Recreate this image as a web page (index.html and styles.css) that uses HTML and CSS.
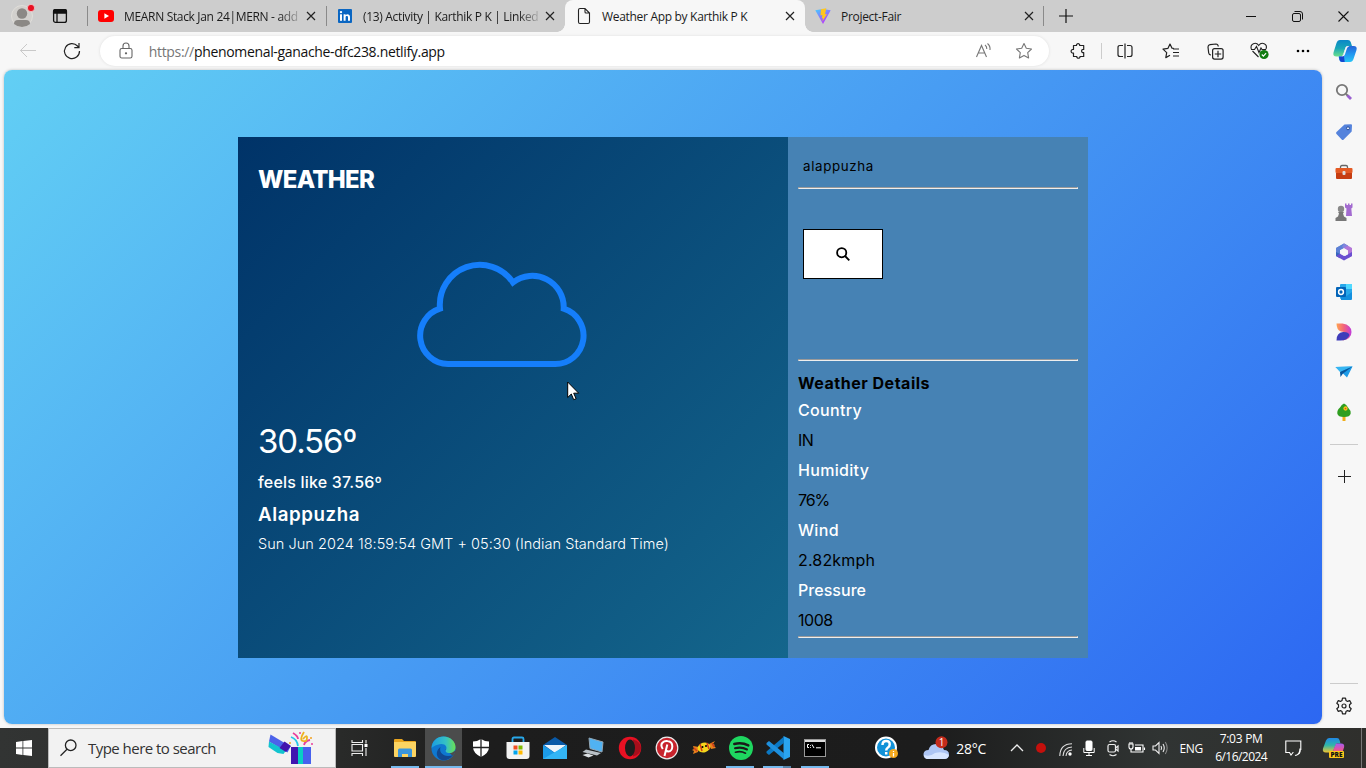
FILE: index.html
```html
<!DOCTYPE html>
<html lang="en">
<head>
<meta charset="utf-8">
<title>Weather App by Karthik P K</title>
<link rel="stylesheet" href="styles.css">
</head>
<body>
<div class="screen">
<header class="tabstrip">
  <div class="profile"><svg width="24" height="24" viewBox="0 0 24 24"><circle cx="12" cy="12" r="10.500" fill="#d2d0cd" stroke="#e0deda"/><circle cx="12" cy="9.500" r="5.200" fill="#8b8885"/><path d="M4 20q0-4 4-4h8q4 0 4 4-3.500 3-8 3t-8-3z" fill="#8b8885"/><circle cx="21" cy="4" r="3.600" fill="#e81123" stroke="#f3dada" stroke-width=".7"/></svg></div>
  <div class="workspaces"><svg width="16" height="16" viewBox="0 0 16 16" fill="none" stroke="#111" stroke-width="1.300"><rect x="1.600" y="1.600" width="12.800" height="12.800" rx="2"/><path d="M1.600 3q0-1.400 1.400-1.400h10q1.400 0 1.400 1.400v2H1.600z" fill="#111"/><path d="M5 5v9"/></svg></div>
  <div class="tab tab-line"><svg class="fav" width="16" height="16" viewBox="0 0 16 16"><rect y="2" width="16" height="12" rx="3" fill="#f00"/><path d="M6.400 5.200v5.600L11 8z" fill="#fff"/></svg><span class="tab-title fade">MEARN Stack Jan 24|MERN - add</span><svg class="x" width="10" height="10" viewBox="0 0 10 10"><path d="M1 1l8 8M9 1L1 9"/></svg></div>
  <div class="tab tab-line"><svg class="fav" width="16" height="16" viewBox="0 0 16 16"><rect x="1" y="1" width="14" height="14" rx="1" fill="#0a66c2"/><g fill="#fff"><rect x="3" y="6.300" width="2" height="6.500"/><circle cx="4" cy="4.100" r="1.200"/><path d="M6.600 6.300h2v1c1-1.700 4.400-1.600 4.400 1.700v3.800h-2V9.400c0-2-2.400-1.900-2.400 0v3.400h-2z"/></g></svg><span class="tab-title fade">(13) Activity | Karthik P K | Linked</span><svg class="x" width="10" height="10" viewBox="0 0 10 10"><path d="M1 1l8 8M9 1L1 9"/></svg></div>
  <div class="tab tab-active"><svg class="fav" width="16" height="16" viewBox="0 0 16 16" fill="none" stroke="#222" stroke-width="1.100"><path d="M2.500 2q0-1.500 1.500-1.500h5l4.500 4.500v9q0 1.500-1.500 1.500H4q-1.500 0-1.500-1.500zM9 .5V4q0 1 1 1h3.500"/></svg><span class="tab-title">Weather App by Karthik P K</span><svg class="x" width="10" height="10" viewBox="0 0 10 10"><path d="M1 1l8 8M9 1L1 9"/></svg></div>
  <div class="tab tab-last"><svg class="fav" width="16" height="16" viewBox="0 0 16 16"><defs><linearGradient id="vt" x1="0" y1="0" x2=".6" y2="1"><stop stop-color="#41d1ff"/><stop offset="1" stop-color="#bd34fe"/></linearGradient></defs><path d="M.3 2.300L8 .9l7.700 1.400L8 16z" fill="url(#vt)"/><path d="M11.300.3L6 1.300l-.6 6.200 2-.4-.7 3.400 1.400-.4-.8 3.400L12 5.900l-2 .3z" fill="#ffc61e"/></svg><span class="tab-title">Project-Fair</span><svg class="x" width="10" height="10" viewBox="0 0 10 10"><path d="M1 1l8 8M9 1L1 9"/></svg></div>
  <div class="newtab"><svg width="14" height="14" viewBox="0 0 14 14" stroke="#111" stroke-width="1.200"><path d="M7 0v14M0 7h14"/></svg></div>
  <div class="winbtns">
    <div><svg width="10" height="10" viewBox="0 0 10 10" stroke="#111"><path d="M0 5.500h10"/></svg></div>
    <div><svg width="11" height="11" viewBox="0 0 11 11" fill="none" stroke="#111"><rect x=".5" y="2.500" width="8" height="8" rx="1.500"/><path d="M2.500.5H8q2.500 0 2.500 2.500v5.500"/></svg></div>
    <div><svg width="11" height="11" viewBox="0 0 11 11" stroke="#111" stroke-width="1.100"><path d="M.5.5l10 10M10.500.5l-10 10"/></svg></div>
  </div>
</header>
<nav class="toolbar">
  <div class="tb"><svg width="18" height="18" viewBox="0 0 18 18" fill="none" stroke="#c9c9c9"><path d="M17 8.500H1.500M8 2L1.500 8.500 8 15"/></svg></div>
  <div class="tb reload"><svg width="18" height="18" viewBox="0 0 18 18" fill="none" stroke="#222" stroke-width="1.200"><path d="M16.500 9A7.500 7.500 0 1 1 14.500 4L16 5.700M16 1v4.700h-4.700"/></svg></div>
  <div class="address">
    <svg class="lock" width="14" height="18" viewBox="0 0 14 18" fill="none" stroke="#666" stroke-width="1.100"><rect x="1" y="6.500" width="12" height="9.500" rx="1.800"/><path d="M4 6.500V4q0-3 3-3t3 3v2.500"/><circle cx="7" cy="11.300" r=".6" fill="#666"/></svg>
    <span class="url"><span class="scheme">https://</span>phenomenal-ganache-dfc238.netlify.app</span>
    <svg class="aloud" width="18" height="16" viewBox="0 0 18 16" fill="none" stroke="#777" stroke-width="1.100"><path d="M1.500 14L6.500 2.500 11.500 14M3.200 10h6.600M10 2q2 1.500 1.800 4M12.500.5Q15.500 3 15 7"/></svg>
    <svg class="star" width="18" height="18" viewBox="0 0 18 18" fill="none" stroke="#777" stroke-width="1.100" stroke-linejoin="round"><path d="M9 1.500l2.300 4.800 5.200.7-3.800 3.600.9 5.300L9 13.400l-4.600 2.500.9-5.300L1.500 7l5.200-.7z"/></svg>
  </div>
  <div class="tb ext"><svg width="16" height="16" viewBox="0 0 16 16" fill="none" stroke="#222" stroke-width="1.200" stroke-linejoin="round"><path d="M3.500 2.500h3c-.3-2.500 3.500-2.500 3.200 0h4v4c-2.800-.5-2.800 3.500 0 3v4H10c.3 2.300-3.500 2.300-3.200 0H3.500V10c-3.200.5-3.200-4 0-3.500z"/></svg></div>
  <div class="tb split"><svg width="16" height="16" viewBox="0 0 16 16" fill="none" stroke="#222" stroke-width="1.200"><path d="M6 2.500H3Q1 2.500 1 4.500v7q0 2 2 2h3M10 2.500h3q2 0 2 2v7q0 2-2 2h-3M8 .5v15"/></svg></div>
  <div class="tb"><svg width="18" height="16" viewBox="0 0 18 16" fill="none" stroke="#222" stroke-width="1.200" stroke-linejoin="round"><path d="M12 5.500l-2-.3L8 1 6 5.300l-5 .8 3.700 3.500-.9 5L8 12.300M11 6h6M11 9.500h6M11 13h6"/></svg></div>
  <div class="tb"><svg width="17" height="17" viewBox="0 0 17 17" fill="none" stroke="#222" stroke-width="1.200"><path d="M4 12Q2 12 1.700 10L1 4Q1 2 3 1.700L9 1q2 0 2.300 2.500"/><rect x="5.600" y="5.600" width="10.500" height="10.500" rx="2"/><path d="M11 7.800v6.400M7.800 11h6.400"/></svg></div>
  <div class="tb"><svg width="19" height="18" viewBox="0 0 19 18" fill="none" stroke="#222" stroke-width="1.100"><path d="M8.500 15L2.500 9M1.300 7C-.3 1.500 6-.5 8.700 3.500 11.500-.5 18 1.500 16 7M1 7.500h3.500l2-3 2.500 6 2-4.500 1 1.500h4"/><circle cx="14" cy="12.500" r="4.600" fill="#107c10" stroke="none"/><path d="M11.800 12.500l1.600 1.600 2.700-3" stroke="#fff"/></svg></div>
  <div class="tb more"><svg width="14" height="4" viewBox="0 0 14 4"><circle cx="2" cy="2" r="1.300"/><circle cx="7" cy="2" r="1.300"/><circle cx="12" cy="2" r="1.300"/></svg></div>
  <div class="tb pilot"><svg width="24" height="24" viewBox="0 0 24 24"><defs><linearGradient id="c1" x1="0" y1="0" x2="0" y2="1"><stop stop-color="#0b86c8"/><stop offset=".5" stop-color="#18a6b8"/><stop offset="1" stop-color="#6be08b"/></linearGradient><linearGradient id="c2" x1="0" y1="0" x2="0" y2="1"><stop stop-color="#2364d8"/><stop offset=".5" stop-color="#2196f0"/><stop offset="1" stop-color="#28c5f5"/></linearGradient></defs><path d="M7 1h8q2 0 2.700 2L19 7h-4q-2 0-2.700 2l-2 6q-.8 2.500-3 2.500H3.500q-4 0-3-4L3.500 4Q4.500 1 7 1z" fill="url(#c1)"/><path d="M17 23H9q-2 0-2.500-2L5.500 17.500H8q2 0 2.700-2l2.200-6.500Q13.700 7 16 7h4.500q4 0 3 4l-3 9q-1 3-3.500 3z" fill="url(#c2)"/><path d="M6 17.500h2q2 0 2.700-2l1 7.500H9q-2 0-2.500-2z" fill="#1545cf"/><path d="M12.600 8.500q.6-1.500 2.400-1.500h1.500q-2 .5-2.600 2.500l-2 6q-.6 2-2.600 2H8q2 0 2.500-2z" fill="#f7f7f7"/></svg></div>
</nav>
<div class="middle">
  <main class="page">
    <section class="card">
      <div class="now">
        <h1>WEATHER</h1>
        <svg class="cloud" width="172" height="110" viewBox="415 259 172 110" fill="none" stroke="#157efb" stroke-width="6"><path d="M448 364A28.300 28.300 0 0 1 440 308.700A40 40 0 0 1 513 282.500A31.400 31.400 0 0 1 563.700 308.700A28.300 28.300 0 0 1 554.700 364Z"/></svg>
        <p class="temp">30.56º</p>
        <p class="feels">feels like 37.56º</p>
        <p class="city">Alappuzha</p>
        <p class="date">Sun Jun 2024 18:59:54 GMT + 05:30 (Indian Standard Time)</p>
        <svg class="cursor" width="13" height="20" viewBox="0 0 13 20"><path d="M.7 1v15.500l3.600-3.500 2.400 5.700 2.400-1-2.400-5.500h5z" fill="#fff" stroke="#000" stroke-width="1"/></svg>
      </div>
      <aside class="details">
        <div class="query">alappuzha</div>
        <hr>
        <button class="go" aria-label="Search"><svg width="14" height="14" viewBox="0 0 14 14" fill="none" stroke="#000" stroke-width="1.800"><circle cx="5.700" cy="5.700" r="4.600"/><path d="M9 9l4.300 4.300"/></svg></button>
        <hr>
        <h2>Weather Details</h2>
        <dl>
          <dt>Country</dt><dd>IN</dd>
          <dt>Humidity</dt><dd class="tight">76%</dd>
          <dt>Wind</dt><dd class="wide">2.82kmph</dd>
          <dt class="plain">Pressure</dt><dd>1008</dd>
        </dl>
        <hr>
      </aside>
    </section>
  </main>
  <aside class="sidebar">
    <div><svg width="18" height="18" viewBox="0 0 18 18" fill="none"><circle cx="7" cy="7" r="5.200" stroke="#777" stroke-width="1.800"/><path d="M11 11l2 2" stroke="#777" stroke-width="2"/><path d="M12.500 12.500l3.500 3.500" stroke="#9a5fd0" stroke-width="2.800"/></svg></div>
    <div><svg width="18" height="18" viewBox="0 0 18 18"><path d="M9.500 1.500l6.500-.3q1 0 1 1l-.3 6.300-8 8q-1 1-2 0L1.500 11q-1-1 0-2z" fill="#5583dc"/><circle cx="13" cy="5.300" r="1.500" fill="#eaf1ff" stroke="#274e9c"/></svg></div>
    <div><svg width="18" height="18" viewBox="0 0 18 18"><path d="M5.500 5V4q0-1.500 1.500-1.500h4q1.500 0 1.500 1.500v1" fill="none" stroke="#666" stroke-width="1.300"/><rect x=".5" y="5" width="17" height="5" rx="1" fill="#e45a24"/><path d="M1 10h16v5q0 1-1 1H2q-1 0-1-1z" fill="#c63d12"/><rect x="7.500" y="8" width="3" height="4" rx="1" fill="#ddd"/></svg></div>
    <div><svg width="18" height="18" viewBox="0 0 18 18"><path d="M10 .5h1.500V2H13V.5h1.500V2H16V.5h1.500v4l-1.200 1 .7 7.500h-6l.5-7.500L10 4.500z" fill="#a36bd0"/><circle cx="6" cy="6" r="3.200" fill="#888"/><path d="M3 9h6l-1 1.500 1 3 2.500 1.500v3H.5v-3L3 13.500l1-3z" fill="#777"/></svg></div>
    <div><svg width="18" height="18" viewBox="0 0 18 18"><path d="M9 .5L1 5v8l4 2.300V7L13 2.700z" fill="#3468bd"/><path d="M9 .5l8 4.500v8l-4 2.300V7.500L7 4z" fill="#b377d8"/><path d="M1 13l4 2.300L9 17.500l8-4.500V9l-7 4-5-2.500z" fill="#6a4fd0"/><path d="M9 .5L1 5v4l4 2V7l8-4.300z" fill="#6f8be0" opacity=".7"/><path d="M9 5.500l3.500 2v4L9 13l-3.500-2V7.500z" fill="#f7f7f7"/></svg></div>
    <div><svg width="18" height="18" viewBox="0 0 18 18"><rect x="5" y="1" width="12" height="15" rx="1" fill="#28a8ea"/><path d="M11 1h6v5h-6z" fill="#50d9ff"/><path d="M6 9l5.500 4L17 9v7q0 1-1 1H6z" fill="#1490df"/><rect x="1" y="4" width="10" height="10" rx="1" fill="#0364b8"/><circle cx="6" cy="9" r="2.400" fill="none" stroke="#fff" stroke-width="1.500"/></svg></div>
    <div><svg width="18" height="18" viewBox="0 0 18 18"><defs><linearGradient id="dg"><stop stop-color="#ffa451"/><stop offset=".5" stop-color="#f2637b"/><stop offset="1" stop-color="#c13bdb"/></linearGradient></defs><path d="M1.500.5h6Q16.500 2 16.500 9t-9 8.500L11 12Q11 8.500 6 8.500 1.500 7 1.500.5z" fill="url(#dg)"/><path d="M1.500 17.500q0-8 6.500-8.500 5.500-.3 6.500 3-2 5.500-9 5.500z" fill="#3f3cba"/></svg></div>
    <div><svg width="18" height="18" viewBox="0 0 18 18"><path d="M.5 4L17.500 3.500 12 14.500 8.500 11z" fill="#1d9be8"/><path d="M.5 4L17.500 3.500 5 9z" fill="#37b6f2"/><path d="M5 9l12.500-5.500L8 10.500 5.500 14z" fill="#07559c"/></svg></div>
    <div><svg width="18" height="18" viewBox="0 0 18 18"><path d="M7.500 12h3v6h-3z" fill="#f0ae1b"/><path d="M9 .5q2.500 1 4 4 3 3 2.700 6Q15 14 9 14t-6.700-3.500Q2 7 5 4.500 6.500 1.500 9 .5z" fill="#2f9e20"/><circle cx="10.500" cy="5.500" r="1.500" fill="#e94b22" stroke="#f9c51b" stroke-width="1.300"/></svg></div>
    <i class="rule"></i>
    <div class="add"><svg width="13" height="13" viewBox="0 0 13 13" stroke="#222"><path d="M6.500 0v13M0 6.500h13"/></svg></div>
    <i class="rule low"></i>
    <div class="gear"><svg width="18" height="18" viewBox="0 0 18 18" fill="none" stroke="#222" stroke-width="1.200" stroke-linejoin="round"><path d="M7.500 1.200h3l.5 2.300 1.500.9 2.200-.8 1.500 2.600-1.700 1.600v2.400l1.700 1.600-1.500 2.600-2.200-.8-1.500.9-.5 2.300h-3L7 14.500l-1.500-.9-2.200.8-1.500-2.600 1.700-1.600V7.800L1.800 6.200l1.500-2.600 2.200.8L7 3.500z"/><circle cx="9" cy="9" r="2"/></svg></div>
  </aside>
</div>
<footer class="taskbar">
  <div class="start"><svg width="16" height="16" viewBox="0 0 16 16" fill="#fff"><path d="M0 2l6.500-.9v6.500H0zM7.300 1L16 0v7.600H7.300zM0 8.400h6.500v6.500L0 14zM7.300 8.400H16V16l-8.700-1z"/></svg></div>
  <div class="search">
    <svg width="18" height="18" viewBox="0 0 18 18" fill="none" stroke="#222" stroke-width="1.300"><circle cx="10.700" cy="6.300" r="5.300"/><path d="M7 10.200L.5 16.700"/></svg>
    <span class="hint">Type here to search</span>
    <svg class="gift" width="48" height="34" viewBox="0 0 48 34"><path d="M3.500 3.500l20 12-3 6L2 10.500z" fill="#4c62ea"/><path d="M2 10.500l17 9-2.500 3.500-6-1-9-6z" fill="#12c4cf"/><path d="M17.500 10.500l6.500 4.500-5 6-6.500-4z" fill="#4214ad"/><rect x="24" y="16" width="20" height="17" fill="#4661ee"/><rect x="24" y="16" width="7" height="17" fill="#4015b0"/><rect x="31" y="16" width="5" height="17" fill="#08cfc4"/><g fill="none" stroke-width="1.800"><path d="M24 6q6 2 7 9" stroke="#27c7e8"/><path d="M26 2q5 3 5 6M37 14q1-4 6-5" stroke="#e83d9c"/><path d="M37 1q-5 8-1 9t4-3-4 1" stroke="#eeb121"/></g><g fill="#e83d9c"><circle cx="33" cy="2" r="1"/><circle cx="45" cy="13" r="1"/></g><circle cx="44" cy="7" r="1" fill="#f0a020"/><circle cx="23" cy="12" r="1" fill="#f0a020"/></svg>
  </div>
  <div class="taskview"><svg width="18" height="16" viewBox="0 0 18 16" fill="none" stroke="#eee" stroke-width="1.100"><path d="M1 0v2.500h10.500V0M1 16v-2.500h10.500V16M1 4.500h10.500v6.500H1zM15 0v3.500M15 8v8"/><path d="M13.500 4h3v3h-3z" fill="#fff" stroke="none"/></svg></div>
  <div class="app open files"><svg width="22" height="20" viewBox="0 0 22 20"><path d="M0 2q0-1 1-1h7l2 2h11q1 0 1 1v14H0z" fill="#e9a51f"/><path d="M0 4h22v14q0 1-1 1H1q-1 0-1-1z" fill="#fcd462"/><path d="M4 19v-7q0-1.500 1.500-1.500h11Q18 10.500 18 12v7h-4v-3H8v3z" fill="#3a96dd"/></svg></div>
  <div class="app open current"><svg width="25" height="25" viewBox="0 0 25 25"><defs><linearGradient id="e1"><stop stop-color="#1b9de2"/><stop offset=".6" stop-color="#35c1c4"/><stop offset="1" stop-color="#6be052"/></linearGradient></defs><circle cx="12.500" cy="12.500" r="12" fill="#0f78d0"/><path d="M14 13q10 5 12 0l-4 7z" fill="#4b4c4c"/><path d="M.5 12C1 5 6 .5 12.500.5 20 .5 24.500 6 24.500 11c0 4-3 6-6 6-3.500 0-4.500-1.500-3.500-3 1.500-3-.5-6-4.500-6C5 8 .5 12 .5 12z" fill="url(#e1)"/><path d="M9.500 11c-2 6 4 11 12.500 8-4 6-11 6.500-14 3.500-4-4-2-9 1.500-11.500z" fill="#12488f"/></svg></div>
  <div class="app"><svg width="18" height="20" viewBox="0 0 18 20"><path d="M9 1q4 2.500 8 2.500V9q0 6-8 10Q1 15 1 9V3.500Q5 3.500 9 1z" fill="#fff"/><path d="M9 1v18M1 9.500h16" stroke="#222" stroke-width="1.300"/></svg></div>
  <div class="app"><svg width="24" height="24" viewBox="0 0 24 24"><path d="M6.500 6V3Q6.500 1.500 8 1.500h8q1.500 0 1.500 1.500v3" fill="none" stroke="#28a8ea" stroke-width="1.800"/><path d="M.5 6h23v14q0 3-3 3h-17q-3 0-3-3z" fill="#f2f2f2"/><path d="M7.500 9.500h4v4h-4z" fill="#f25022"/><path d="M12.500 9.500h4v4h-4z" fill="#7fba00"/><path d="M7.500 14.500h4v4h-4z" fill="#00a4ef"/><path d="M12.500 14.500h4v4h-4z" fill="#ffb900"/></svg></div>
  <div class="app"><svg width="24" height="22" viewBox="0 0 24 22"><path d="M0 8L12 0l12 8v7H0z" fill="#0a5aa8"/><path d="M1 8h22L12 16z" fill="#eef4fa"/><path d="M0 8l12 8 12-8v14H0z" fill="#1c9be8"/><path d="M0 22L24 8v14z" fill="#33b5f5"/></svg></div>
  <div class="app"><svg width="24" height="22" viewBox="0 0 24 22"><path d="M8 1l14 4-1 10-12-3.500z" fill="#50b2f2" stroke="#93a6b4"/><path d="M5 12.500l15 3.500-4 2.500L1.500 15z" fill="#b9c0c6"/><path d="M1.500 18l5-1.500 6 2-5 2z" fill="#dde1e4"/></svg></div>
  <div class="app"><svg width="24" height="24" viewBox="0 0 24 24"><circle cx="12" cy="12" r="11.200" fill="#e81123"/><path d="M15 3.500q8 2 8 8.500t-8 8.500z" fill="#a70e1b"/><ellipse cx="12" cy="12" rx="5" ry="8.500" fill="#1d1d1d"/></svg></div>
  <div class="app"><svg width="24" height="24" viewBox="0 0 24 24"><circle cx="12" cy="12" r="10.800" fill="#c8232c" stroke="#ececec" stroke-width="1.200"/><path d="M7.800 13C4 7.500 9 4.500 12.500 5c7 .8 5.500 10.500 1 10.500-1.500 0-2-1-2-1M12.300 8.500L9.500 20" fill="none" stroke="#fff" stroke-width="2"/></svg></div>
  <div class="app"><svg width="24" height="16" viewBox="0 0 24 16"><path d="M1 6l6 1-1 5-5 2 1-3-2-1 2-1zM23 1l-6 3 2 5 5-1-2-2 1-1-2-1z" fill="#e8801c"/><ellipse cx="12" cy="7.500" rx="6.500" ry="4.800" fill="#f5d51b" transform="rotate(-15 12 7.500)"/><path d="M8 4l2 7M15 3l2 6M2 8l3 3M20 3l2 4" stroke="#d33c1c" stroke-width="1.500"/><circle cx="10.500" cy="7" r="1"/><circle cx="14" cy="6" r="1"/></svg></div>
  <div class="app open"><svg width="24" height="24" viewBox="0 0 24 24" fill="none" stroke="#1a1a1a" stroke-linecap="round"><circle cx="12" cy="12" r="12" fill="#1ed760" stroke="none"/><path d="M5.300 8q7.500-2 14 1.400" stroke-width="2.500"/><path d="M6 12.300q6.500-1.800 12 1.200" stroke-width="2"/><path d="M6.500 16.200q5.500-1.400 10 1" stroke-width="1.700"/></svg></div>
  <div class="app open grouped"><svg width="24" height="24" viewBox="0 0 24 24"><path d="M17.500 0L24 3v18l-6.500 3z" fill="#2aa4f0"/><path d="M18 .5v6.300L3 19 .5 17v-1.500z" fill="#0b78c4"/><path d="M18 23.500v-6.300L3 5 .5 7v1.500z" fill="#1e90de"/></svg></div>
  <div class="app open"><svg width="22" height="18" viewBox="0 0 22 18"><rect x=".5" y=".5" width="21" height="17" fill="#000" stroke="#999"/><path d="M1 2h20" stroke="#ddd" stroke-width="2"/><path d="M5 5.500H3.500v3H5M6.500 6v.8M6.500 8v.8M8 5.500l2 3.500M12 8.800h5" fill="none" stroke="#fff"/></svg></div>
  <div class="help"><svg width="24" height="24" viewBox="0 0 24 24"><circle cx="11" cy="11.500" r="10" fill="#1292d8" stroke="#fff" stroke-width="2"/><path d="M7.500 9q0-4 3.700-4t3.500 3.500q0 2-2 3.200-1.500 1-1.500 2.800M11.200 16v2.500" fill="none" stroke="#fff" stroke-width="2.500"/><circle cx="18.500" cy="17.500" r="4.500" fill="#f5a81c"/><path d="M18.500 15v1M18.500 17v3.500" stroke="#fff" stroke-width="1.300"/></svg></div>
  <div class="weather"><svg width="27" height="24" viewBox="0 0 27 24"><path d="M6 23q-6 0-5.500-5 .5-4 5-4Q7 8 13 8t8 6q5 0 5 4.500T21 23z" fill="#adc5f4"/><path d="M4 23q-3-1-3-4 6 2 11-2 8-2 14 2-1 4-5 4z" fill="#d7e5ff"/><circle cx="18.500" cy="6.300" r="6" fill="#c42b1c"/><text x="18.500" y="10" text-anchor="middle" font-size="10" fill="#fff">1</text></svg><span>28°C</span></div>
  <div class="tray w24"><svg width="14" height="8" viewBox="0 0 14 8" fill="none" stroke="#eee" stroke-width="1.300"><path d="M1 7l6-6 6 6"/></svg></div>
  <div class="tray w23"><svg width="10" height="10" viewBox="0 0 10 10"><circle cx="5" cy="5" r="5" fill="#c4100c"/></svg></div>
  <div class="tray w26 dip"><svg width="13" height="13" viewBox="0 0 13 13" fill="none" stroke="#ddd" stroke-width="1.100"><path d="M.8 13Q1 1 13 .8M4 13q.5-8.500 9-9M7 13q.5-5.500 6-6"/><circle cx="11" cy="11" r="1.700" fill="#fff" stroke="none"/></svg></div>
  <div class="tray w22"><svg width="12" height="16" viewBox="0 0 12 16" fill="none" stroke="#fff"><rect x="3" y="1" width="6" height="9.500" rx="1" fill="#fff"/><path d="M.8 8v4.500h10.400V8M6 12.500v3M3 15.500h6"/></svg></div>
  <div class="tray w25"><svg width="12" height="16" viewBox="0 0 12 16" fill="none" stroke="#eee" stroke-width="1.200"><rect x="1" y="4.500" width="7.500" height="7.500" rx="1.500"/><path d="M8.500 8l2.500-2v5L8.500 9M2.500 2Q6-.5 9.500 2M2.500 14.500q3.500 2.500 7 0"/></svg></div>
  <div class="tray w23"><svg width="17" height="12" viewBox="0 0 17 12" fill="none" stroke="#fff" stroke-width="1.100"><path d="M1 2h4v3Q5 7 3 7T1 5zM2 0v2M4 0v2M3 7v3h2M7 3h8v7H5M16.500 5.500v2.500"/><path d="M7 5h6v3.500H7z" fill="#fff" stroke="none"/></svg></div>
  <div class="tray w24"><svg width="17" height="14" viewBox="0 0 17 14" fill="none" stroke="#eee" stroke-width="1.100"><path d="M1 5h2.500L7 1.500v11L3.500 9H1zM9 5q1.200 2 0 4M11 3q2.500 4 0 8"/><path d="M13.300 1q3.700 6 0 12" stroke="#888"/></svg></div>
  <div class="lang">ENG</div>
  <div class="clock"><span>7:03 PM</span><span class="day">6/16/2024</span></div>
  <div class="tray w42"><svg width="17" height="17" viewBox="0 0 17 17" fill="none" stroke="#fff" stroke-width="1.100"><path d="M8.500 12.500H8L6 15l-1.500-2.500H.8V1h15v9"/><path d="M15 8.500q1.500 6-5 7 5-.5 5-7z" fill="#fff"/></svg></div>
  <div class="tray w38 pre"><svg width="22" height="22" viewBox="0 0 22 22"><defs><linearGradient id="p1" x1="0" y1="0" x2="0" y2="1"><stop stop-color="#2187e6"/><stop offset=".5" stop-color="#2fb6a8"/><stop offset="1" stop-color="#f2c531"/></linearGradient><linearGradient id="p2" x1="0" y1="0" x2="0" y2="1"><stop stop-color="#a65cf0"/><stop offset=".6" stop-color="#e7549b"/><stop offset="1" stop-color="#f58b54"/></linearGradient></defs><path d="M6 1h8q2 0 2.500 2l1 3.500h-4l-4 9H3q-4 0-3-4L3 3.500Q4 1 6 1z" fill="url(#p1)"/><path d="M13 6.500h5q4 0 3 4l-2 6H9z" fill="url(#p2)"/><rect x="6" y="14" width="15" height="7" rx="1" fill="#ffc61a"/><text x="13.500" y="20" text-anchor="middle" font-size="6.500" font-weight="800" fill="#111">PRE</text></svg></div>
  <div class="desk"></div>
</footer>
</div>
</body>
</html>
```
FILE: styles.css
```css
* { box-sizing: border-box; margin: 0; padding: 0; }
body { width: 1366px; height: 768px; overflow: hidden; font-family: "Open Sans", "Noto Sans", sans-serif; font-size: 12px; color: #1b1b1b; }
svg { display: block; flex: none; overflow: visible; }
.screen { display: flex; flex-direction: column; height: 768px; background: #f7f7f7; }

.tabstrip { display: flex; height: 32px; background: #cdcdcd; }
.tabstrip > div { display: flex; align-items: center; }
.profile { width: 44px; justify-content: center; }
.workspaces { width: 43px; padding-left: 8px; }
.tab { width: 239px; padding: 0 10px 0 11px; position: relative; }
.tab-line::before, .tab-last::after { content: ""; position: absolute; left: 0; top: 6px; height: 20px; width: 1px; background: #8a8a8a; }
.tab-last::after { left: auto; right: 0; }
.tab-title { flex: 1; min-width: 0; margin: 0 6px 0 10px; padding-top: 1px; white-space: nowrap; line-height: 20px; letter-spacing: -.31px; }
.fade { -webkit-mask-image: linear-gradient(90deg, #000 88%, rgba(0, 0, 0, .15)); mask-image: linear-gradient(90deg, #000 88%, rgba(0, 0, 0, .15)); letter-spacing: -.33px; }
.x { fill: none; stroke: #222; stroke-width: 1.2; }
.tab-active { width: 240px; background: #f7f7f7; border-radius: 8px 8px 0 0; }
.tab-active::before, .tab-active::after { content: ""; position: absolute; bottom: 0; width: 8px; height: 8px; }
.tab-active::before { left: -8px; background: radial-gradient(circle at 0 0, transparent 7.5px, #f7f7f7 8px); }
.tab-active::after { right: -8px; background: radial-gradient(circle at 100% 0, transparent 7.5px, #f7f7f7 8px); }
.tab-last { padding-left: 10px; }
.newtab { width: 44px; justify-content: center; }
.winbtns { margin-left: auto; }
.winbtns div { width: 46px; display: flex; justify-content: center; }

.toolbar { display: flex; height: 38px; padding-left: 6px; align-items: center; }
.tb { width: 44.4px; height: 38px; display: flex; align-items: center; justify-content: center; flex: none; }
.reload { padding-right: 1px; }
.address { width: 950px; height: 30px; margin-left: 5px; border-radius: 15px; background: #fff; box-shadow: 0 0 3px #ddd; display: flex; align-items: center; padding: 0 16px 0 19px; }
.url { flex: 1; margin-left: 16px; font-size: 14px; line-height: 20px; color: #111; white-space: nowrap; letter-spacing: -.33px; padding-top: 1px; }
.scheme { color: #767676; }
.aloud { margin-right: 22px; }
.ext { margin-left: 6px; width: 46px; }
.split { background: linear-gradient(#ccc, #ccc) 0 50% / 1px 16px no-repeat; width: 48px; }
.more { width: 41px; }
.pilot { width: 43px; }

.middle { display: flex; height: 658px; padding-left: 4px; }
.page { width: 1318px; height: 654px; border-radius: 8px; background: linear-gradient(135deg, #62cff4, #2c67f2); box-shadow: 0 0 3px rgba(0, 0, 0, .25); padding: 67px 234px 0; font-family: Inter, sans-serif; }
.card { display: flex; height: 521px; }
.now { width: 550px; padding: 26px 20px 0; color: #fff; background: linear-gradient(135deg, #003368, #14668c); position: relative; white-space: nowrap; }
.now h1 { font-size: 24px; line-height: 34px; font-weight: 800; letter-spacing: -.7px; }
.cloud { margin: 62px 0 0 157px; }
.temp { font-size: 33px; line-height: 44px; margin-top: 50px; letter-spacing: -1.1px; }
.feels { font-size: 16px; line-height: 24px; margin-top: 7px; font-weight: 500; letter-spacing: .19px; }
.city { font-size: 18.72px; line-height: 28px; margin-top: 7px; font-weight: 600; letter-spacing: .58px; }
.date { font-size: 14.5px; line-height: 24px; margin-top: 3px; font-weight: 300; letter-spacing: .04px; }
.cursor { position: absolute; left: 329px; top: 244px; }
.details { width: 300px; background: #4682b4; padding: 18px 10px 0; color: #000; }
.details hr { border: 1px inset #eee; height: 2px; }
.query { font-size: 13.33px; line-height: 22px; padding-left: 5px; margin-bottom: 10px; letter-spacing: .65px; }
.go { display: flex; align-items: center; justify-content: center; width: 80px; height: 50px; margin: 40px 0 80px 5px; background: #fff; border: 1px solid #000; }
.details h2 { font-size: 16px; line-height: 24px; margin-top: 10px; font-weight: 700; letter-spacing: .51px; }
.details dl { font-size: 16px; line-height: 30px; margin-bottom: 1px; }
.details dt { color: #fff; font-weight: 500; letter-spacing: .31px; }
.details dd { letter-spacing: -.45px; }
.details .plain { letter-spacing: .04px; }
.details .wide { letter-spacing: .16px; }
.details .tight { letter-spacing: -1.1px; }

.sidebar { width: 44px; display: flex; flex-direction: column; align-items: center; padding-top: 2px; }
.sidebar div { height: 40px; display: flex; align-items: center; flex: none; }
.rule { width: 28px; height: 1px; background: #ccc; margin-top: 12px; }
.sidebar .add { margin-top: 11px; }
.low { margin-top: 187px; }
.sidebar .gear { margin-top: 2px; }

.taskbar { display: flex; height: 40px; color: #fff; background: linear-gradient(90deg, #323433 0, #292a29 25%, #1d1d1d 35%, #1c1c1c 68%, #303433 85%, #2f2f2c 100%); }
.taskbar > div { display: flex; align-items: center; justify-content: center; flex: none; }
.start { width: 48px; }
.taskbar > .search { width: 288px; background: #f2f2f2; border: 1px solid #bbb; justify-content: flex-start; padding-left: 11px; color: #333; }
.hint { font-size: 15px; margin-left: 10px; flex: 1; white-space: nowrap; letter-spacing: -.53px; }
.gift { margin-right: 20px; }
.taskview { width: 52px; padding-right: 4px; }
.app { width: 37.1px; position: relative; padding-left: 1px; }
.open::after { content: ""; position: absolute; bottom: 0; left: 4.500px; width: 28px; height: 2px; background: #76b9ed; }
.files { padding: 0 4px 0 0; }
.files::after { left: 3px; }
.current { background: #4b4c4c; padding: 0; }
.current::after { left: 0; width: 100%; }
.grouped::after { background: linear-gradient(90deg, #76b9ed 20px, #5685ab 20px); }
.help { width: 36px; margin-left: 36px; }
.taskbar > .weather { width: 100px; padding-left: 18px; justify-content: flex-start; gap: 6px; font-size: 14px; letter-spacing: -.2px; }
.w22 { width: 22px; } .w23 { width: 23px; } .w24 { width: 24px; } .w25 { width: 25px; } .w26 { width: 26px; } .w38 { width: 38px; } .w42 { width: 42px; }
.dip { padding-top: 3px; }
.lang { width: 38px; letter-spacing: -.45px; }
.clock { width: 62px; flex-direction: column; line-height: 18px; letter-spacing: -.27px; }
.day { letter-spacing: -.54px; }
.taskbar .pre { padding-left: 2px; }
.desk { margin-left: 9px; width: 5px; border-left: 1px solid #777; }
```
